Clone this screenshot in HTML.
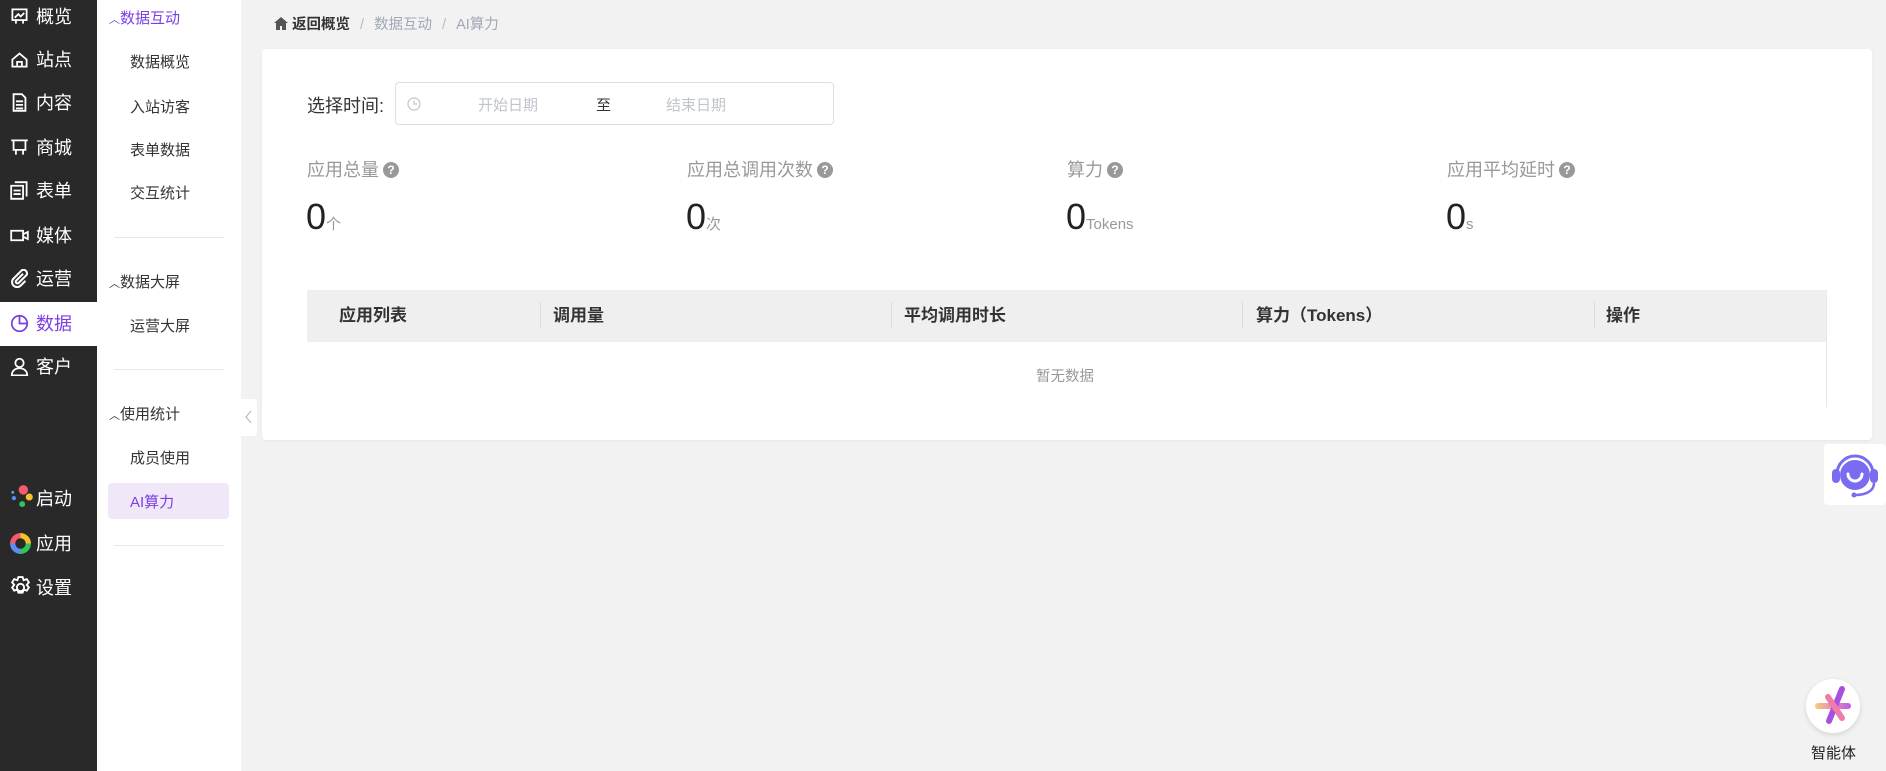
<!DOCTYPE html>
<html><head><meta charset="utf-8"><style>
*{margin:0;padding:0;box-sizing:border-box}
body{width:1886px;height:771px;overflow:hidden;background:#f2f2f2;font-family:"Liberation Sans","Noto Sans CJK SC",sans-serif;position:relative}
.dark{position:absolute;left:0;top:0;width:97px;height:771px;background:#292929}
.di{position:absolute;left:0;width:97px;height:44px;color:#fff;font-size:18px;line-height:44px}
.di .t{position:absolute;left:36px}
.di svg{position:absolute;left:10px;top:12px}
.di.act{background:#fff;color:#7b3fe4}
.sub{position:absolute;left:97px;top:0;width:144px;height:771px;background:#fff}
.sg{position:absolute;left:12px;font-size:15px;color:#333}
.sg.p{color:#7b3fe4}
.si{position:absolute;left:33px;font-size:15px;color:#333}
.hr{position:absolute;left:17px;width:110px;height:1px;background:#e8e8e8}
.abs{position:absolute}
.card{position:absolute;left:262px;top:49px;width:1610px;height:391px;background:#fff;border-radius:4px;box-shadow:0 1px 3px rgba(0,0,0,.05)}
.lab{position:absolute;top:156px;font-size:18px;color:#999}
.q{display:inline-block;width:16px;height:16px;border-radius:50%;background:#999;color:#fff;font-size:12px;line-height:16px;text-align:center;font-weight:bold;vertical-align:2px;margin-left:4px}
.num{position:absolute;top:196px;font-size:36px;color:#222}
.num small{font-size:15px;color:#999}
.th{position:absolute;top:290px;height:52px;line-height:52px;font-size:17px;font-weight:bold;color:#333}
.vd{position:absolute;top:302px;width:1px;height:26px;background:#ddd}
</style></head><body>
<div class="dark">
 <div class="di" style="top:-5px"><svg width="19" height="19" viewBox="0 0 16 16" fill="none" stroke="#fff" stroke-width="1.5"><rect x="2" y="2" width="12" height="9"/><path d="M4 9l3-3 2 2 3-3M5 11v3M11 11v3"/></svg><span class="t">概览</span></div>
 <div class="di" style="top:38px"><svg width="19" height="19" viewBox="0 0 16 16" fill="none" stroke="#fff" stroke-width="1.5"><path d="M2 8l6-5 6 5v6H2z M6 14v-4h4v4"/></svg><span class="t">站点</span></div>
 <div class="di" style="top:81px"><svg width="19" height="19" viewBox="0 0 16 16" fill="none" stroke="#fff" stroke-width="1.5"><path d="M3 1h7l3 3v11H3z M5 7h6M5 10h6M5 13h6"/></svg><span class="t">内容</span></div>
 <div class="di" style="top:126px"><svg width="19" height="19" viewBox="0 0 16 16" fill="none" stroke="#fff" stroke-width="1.5"><path d="M1 2h14M3 2v8h10V2M5 10v4M11 10v4"/></svg><span class="t">商城</span></div>
 <div class="di" style="top:169px"><svg width="19" height="19" viewBox="0 0 16 16" fill="none" stroke="#fff" stroke-width="1.5"><path d="M4 1h10v12M1 4h10v11H1z M3 8h6M3 11h6"/></svg><span class="t">表单</span></div>
 <div class="di" style="top:214px"><svg width="19" height="19" viewBox="0 0 16 16" fill="none" stroke="#fff" stroke-width="1.5"><rect x="1" y="4" width="10" height="8"/><path d="M11 7l4-2v6l-4-2"/></svg><span class="t">媒体</span></div>
 <div class="di" style="top:257px"><svg width="19" height="19" viewBox="0 0 16 16" fill="none" stroke="#fff" stroke-width="1.7"><path d="M11 4L5 10a1.5 1.5 0 002 2l7-7a3 3 0 00-4-4L3 8a4 4 0 006 6l4-4"/></svg><span class="t">运营</span></div>
 <div class="di act" style="top:302px"><svg width="19" height="19" viewBox="0 0 16 16" fill="none" stroke="#7b3fe4" stroke-width="1.5"><circle cx="8" cy="8" r="6.5"/><path d="M8 1.5V8h6.5"/></svg><span class="t">数据</span></div>
 <div class="di" style="top:345px"><svg width="19" height="19" viewBox="0 0 16 16" fill="none" stroke="#fff" stroke-width="1.5"><circle cx="8" cy="5" r="3.5"/><path d="M1.5 15.5c0-4 3-6 6.5-6s6.5 2 6.5 6z"/></svg><span class="t">客户</span></div>
 <div class="di" style="top:477px"><svg width="24" height="26" viewBox="0 0 20 22" style="left:9px;top:7px"><circle cx="12" cy="5" r="4" fill="#f25c6c"/><circle cx="17" cy="11" r="3" fill="#f7c12d"/><circle cx="11" cy="17" r="2.5" fill="#2dc65a"/><circle cx="4" cy="12" r="1.8" fill="#5b8ef0"/><circle cx="3" cy="7" r="1.2" fill="#3bb4f2"/></svg><span class="t">启动</span></div>
 <div class="di" style="top:522px"><svg width="23" height="23" viewBox="0 0 22 22" style="left:9px;top:10px"><path d="M11 1a10 10 0 00-10 10h5a5 5 0 015-5z" fill="#f25c6c"/><path d="M11 1a10 10 0 0110 10h-5a5 5 0 00-5-5z" fill="#f7c12d"/><path d="M21 11a10 10 0 01-10 10v-5a5 5 0 005-5z" fill="#2dc65a"/><path d="M1 11a10 10 0 0010 10v-5a5 5 0 01-5-5z" fill="#5b8ef0"/></svg><span class="t">应用</span></div>
 <div class="di" style="top:566px"><svg width="23" height="23" viewBox="0 0 22 22" style="left:9px;top:10px" fill="none" stroke="#fff" stroke-width="1.8"><path d="M9 1h4l1 3 3-1 2 3-2 2.5 2 2.5-2 3-3-1-1 3H9l-1-3-3 1-2-3 2-2.5L3 6l2-3 3 1z"/><circle cx="11" cy="11" r="3.5"/></svg><span class="t">设置</span></div>
</div>
<div class="sub">
 <div class="sg p" style="top:7px"><span style="font-size:11px">︿</span>数据互动</div>
 <div class="si" style="top:51px">数据概览</div>
 <div class="si" style="top:96px">入站访客</div>
 <div class="si" style="top:139px">表单数据</div>
 <div class="si" style="top:182px">交互统计</div>
 <div class="hr" style="top:237px"></div>
 <div class="sg" style="top:271px"><span style="font-size:11px">︿</span>数据大屏</div>
 <div class="si" style="top:315px">运营大屏</div>
 <div class="hr" style="top:369px"></div>
 <div class="sg" style="top:403px"><span style="font-size:11px">︿</span>使用统计</div>
 <div class="si" style="top:447px">成员使用</div>
 <div class="abs" style="left:11px;top:483px;width:121px;height:36px;background:#f0e8f8;border-radius:4px"></div>
 <div class="si" style="top:491px;color:#7b3fe4">AI算力</div>
 <div class="hr" style="top:545px"></div>
</div>
<div class="abs" style="left:241px;top:399px;width:16px;height:37px;background:#fff;border-radius:0 4px 4px 0"><svg width="16" height="37"><path d="M10 12l-5 6 5 6" fill="none" stroke="#bbb" stroke-width="1.2"/></svg></div>
<div class="abs" style="left:274px;top:13px;font-size:14.5px;color:#333;font-weight:bold"><svg width="14" height="13" viewBox="0 0 14 13" style="vertical-align:-1px"><path d="M7 0L0 6h2v7h4V9h2v4h4V6h2z" fill="#555"/></svg> 返回概览<span style="font-weight:normal;color:#bbb;margin:0 10px">/</span><span style="font-weight:normal;color:#a0a8b8">数据互动</span><span style="font-weight:normal;color:#bbb;margin:0 10px">/</span><span style="font-weight:normal;color:#a0a8b8">AI算力</span></div>
<div class="card"></div>
<div class="abs" style="left:307px;top:92px;font-size:18px;color:#333">选择时间:</div>
<div class="abs" style="left:395px;top:82px;width:439px;height:43px;border:1px solid #dcdfe6;border-radius:4px;font-size:15px">
 <svg width="14" height="14" viewBox="0 0 14 14" style="position:absolute;left:11px;top:14px" fill="none" stroke="#c0c4cc" stroke-width="1.2"><circle cx="7" cy="7" r="6"/><path d="M7 3.5V7h3"/></svg>
 <span class="abs" style="left:82px;top:11px;color:#c0c4cc">开始日期</span>
 <span class="abs" style="left:200px;top:11px;color:#333">至</span>
 <span class="abs" style="left:270px;top:11px;color:#c0c4cc">结束日期</span>
</div>
<div class="lab" style="left:307px">应用总量<span class="q">?</span></div>
<div class="lab" style="left:687px">应用总调用次数<span class="q">?</span></div>
<div class="lab" style="left:1067px">算力<span class="q">?</span></div>
<div class="lab" style="left:1447px">应用平均延时<span class="q">?</span></div>
<div class="num" style="left:306px">0<small>个</small></div>
<div class="num" style="left:686px">0<small>次</small></div>
<div class="num" style="left:1066px">0<small>Tokens</small></div>
<div class="num" style="left:1446px">0<small>s</small></div>
<div class="abs" style="left:307px;top:290px;width:1520px;height:52px;background:#efefef"></div>
<div class="abs" style="left:1826px;top:290px;width:1px;height:117px;background:#e8e8e8"></div>
<div class="vd" style="left:540px"></div><div class="vd" style="left:891px"></div><div class="vd" style="left:1242px"></div><div class="vd" style="left:1594px"></div>
<div class="th" style="left:339px">应用列表</div>
<div class="th" style="left:553px">调用量</div>
<div class="th" style="left:904px">平均调用时长</div>
<div class="th" style="left:1256px">算力（Tokens）</div>
<div class="th" style="left:1606px">操作</div>
<div class="abs" style="left:1036px;top:365px;font-size:14.5px;color:#999">暂无数据</div>
<div class="abs" style="left:1824px;top:444px;width:62px;height:61px;background:#fff;border-radius:4px"><svg width="62" height="61" viewBox="0 0 62 61"><path d="M13 30a18 18 0 0136 0" fill="none" stroke="#7a6cf0" stroke-width="3"/><circle cx="31" cy="31" r="15" fill="#7a6cf0"/><path d="M24 30a7 7 0 0014 0" fill="none" stroke="#fff" stroke-width="3" stroke-linecap="round"/><rect x="8" y="25" width="8" height="14" rx="4" fill="#7a6cf0"/><rect x="46" y="25" width="8" height="14" rx="4" fill="#7a6cf0"/><path d="M50 39c0 8-8 12-19 12" fill="none" stroke="#7a6cf0" stroke-width="2.5"/><circle cx="30" cy="51" r="2.5" fill="#7a6cf0"/></svg></div>
<div class="abs" style="left:1806px;top:679px;width:54px;height:54px;border-radius:50%;background:#fff;box-shadow:0 2px 6px rgba(0,0,0,.12)"><svg width="54" height="54" viewBox="0 0 54 54"><defs><linearGradient id="g" gradientUnits="userSpaceOnUse" x1="10" y1="0" x2="44" y2="0"><stop offset="0" stop-color="#f7c97a"/><stop offset="0.5" stop-color="#e58ac0"/><stop offset="1" stop-color="#c05ee0"/></linearGradient></defs><path d="M12 27h30" stroke="url(#g)" stroke-width="6" stroke-linecap="round"/><path d="M36 10L23 42" stroke="#a74fe0" stroke-width="6" stroke-linecap="round"/><path d="M22 18l14 21" stroke="#f07aa8" stroke-width="6" stroke-linecap="round"/></svg></div>
<div class="abs" style="left:1811px;top:742px;font-size:15px;color:#222">智能体</div>
</body></html>
